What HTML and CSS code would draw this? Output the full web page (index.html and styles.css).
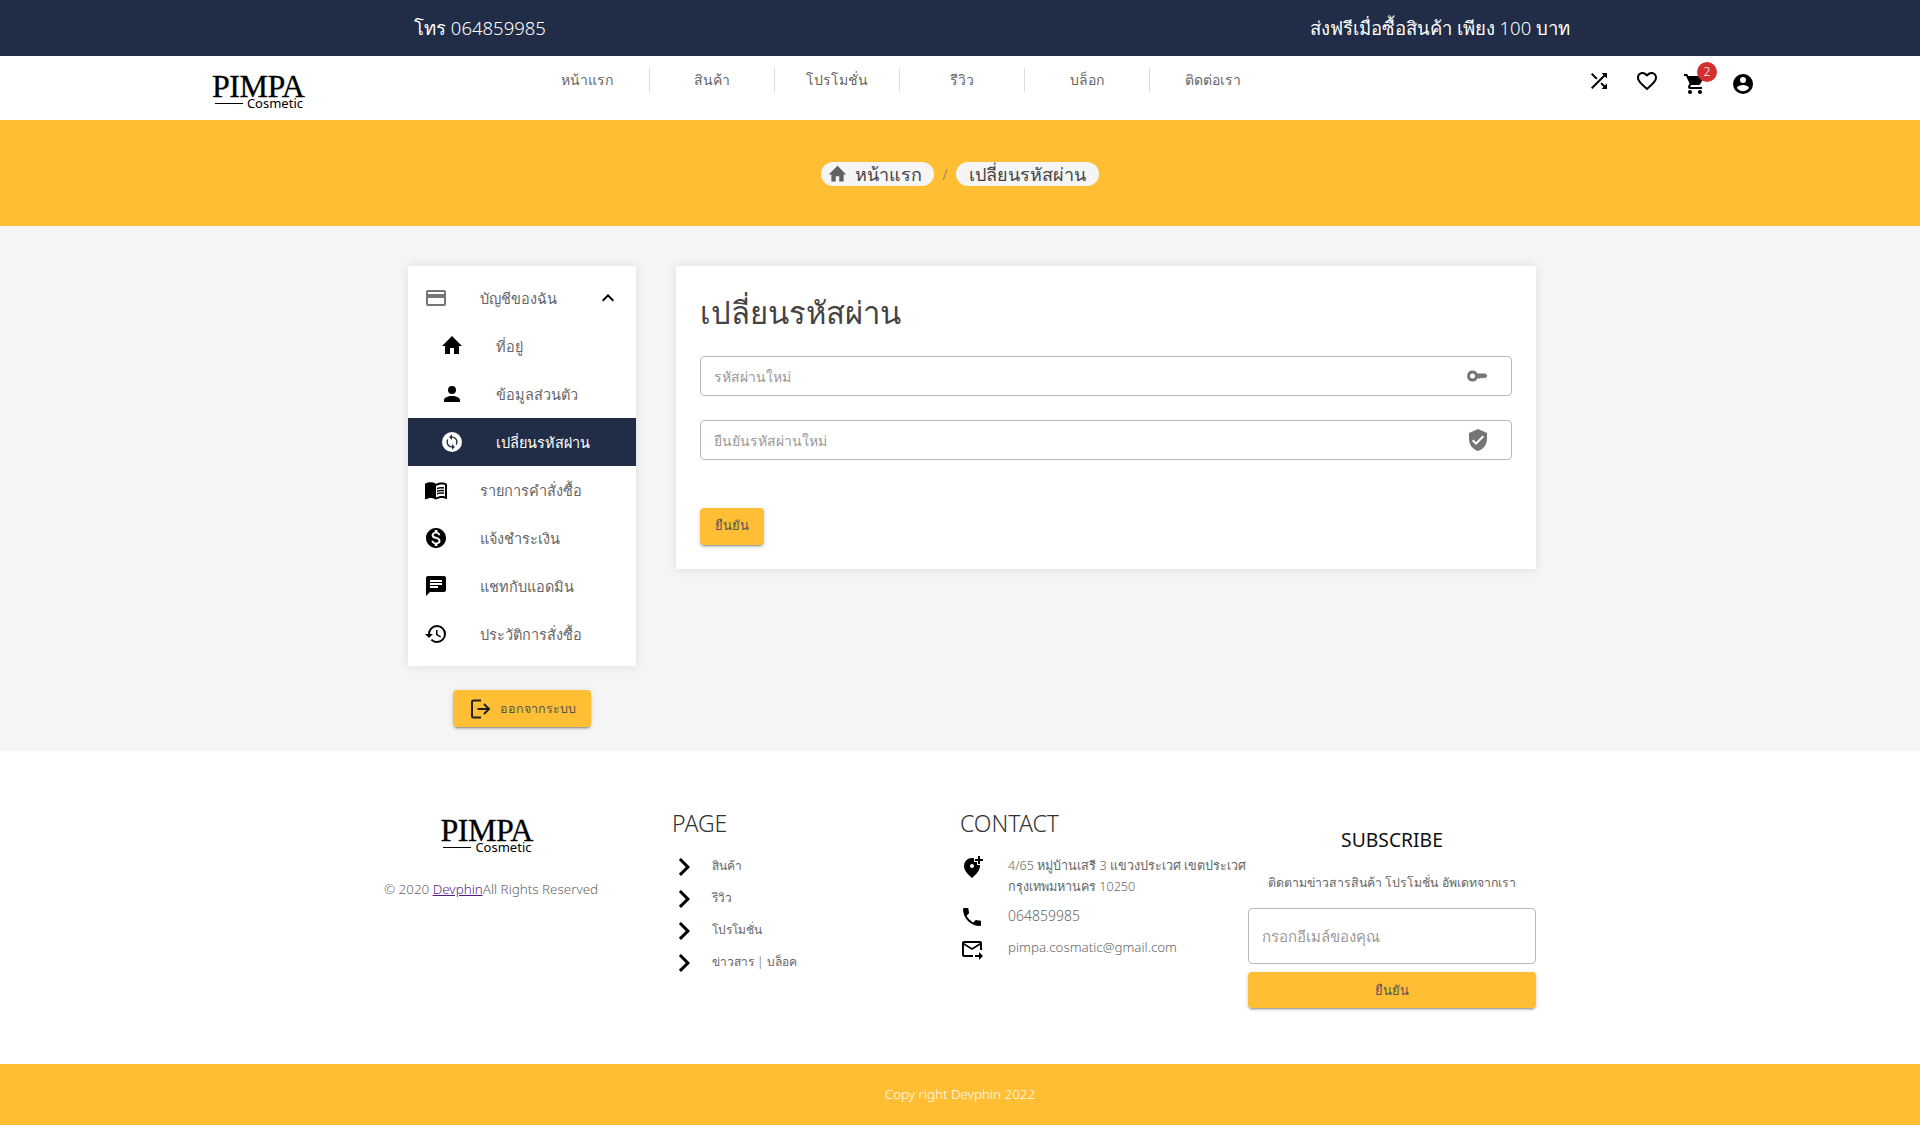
FILE: index.html
```html
<!DOCTYPE html>
<html lang="th">
<head>
    <meta charset="UTF-8">
    <meta name="viewport" content="width=device-width, initial-scale=1.0">
    <title>Pimpa Cosmetic</title>
    <link rel="stylesheet" href="styles.css">
</head>
<body>

    <div class="topbar">
        <div class="topbar-cell">โทร 064859985</div>
        <div class="topbar-cell">ส่งฟรีเมื่อซื้อสินค้า เพียง 100 บาท</div>
    </div>

    <header class="navbar">
        <a class="logo" href="#">
            <span class="logo-main">PIMPA</span>
            <span class="logo-sub">Cosmetic</span>
        </a>
        <nav class="nav-links">
            <a href="#">หน้าแรก</a>
            <a href="#">สินค้า</a>
            <a href="#">โปรโมชั่น</a>
            <a href="#">รีวิว</a>
            <a href="#">บล็อก</a>
            <a href="#">ติดต่อเรา</a>
        </nav>
        <div class="nav-icons">
            <a href="#"><svg class="icon" viewBox="0 0 24 24"><path d="M14.83,13.41L13.42,14.82L16.55,17.95L14.5,20H20V14.5L17.96,16.54L14.83,13.41M14.5,4L16.54,6.04L4,18.59L5.41,20L17.96,7.46L20,9.5V4M10.59,9.17L5.41,4L4,5.41L9.17,10.59L10.59,9.17Z"/></svg></a>
            <a href="#"><svg class="icon" viewBox="0 0 24 24"><path d="M12.1,18.55L12,18.65L11.89,18.55C7.14,14.24 4,11.39 4,8.5C4,6.5 5.5,5 7.5,5C9.04,5 10.54,6 11.07,7.36H12.93C13.46,6 14.96,5 16.5,5C18.5,5 20,6.5 20,8.5C20,11.39 16.86,14.24 12.1,18.55M16.5,3C14.76,3 13.09,3.81 12,5.08C10.91,3.81 9.24,3 7.5,3C4.42,3 2,5.41 2,8.5C2,12.27 5.4,15.36 10.55,20.03L12,21.35L13.45,20.03C18.6,15.36 22,12.27 22,8.5C22,5.41 19.58,3 16.5,3Z"/></svg></a>
            <a href="#" class="cart low"><svg class="icon" viewBox="0 0 24 24"><path d="M17,18C15.89,18 15,18.89 15,20A2,2 0 0,0 17,22A2,2 0 0,0 19,20C19,18.89 18.1,18 17,18M1,2V4H3L6.6,11.59L5.24,14.04C5.09,14.32 5,14.65 5,15A2,2 0 0,0 7,17H19V15H7.42A0.25,0.25 0 0,1 7.17,14.75C7.17,14.7 7.18,14.66 7.2,14.63L8.1,13H15.55C16.3,13 16.96,12.58 17.3,11.97L20.88,5.5C20.95,5.34 21,5.17 21,5A1,1 0 0,0 20,4H5.21L4.27,2M7,18C5.89,18 5,18.89 5,20A2,2 0 0,0 7,22A2,2 0 0,0 9,20C9,18.89 8.1,18 7,18Z"/></svg><span class="badge">2</span></a>
            <a href="#" class="low"><svg class="icon" viewBox="0 0 24 24"><path d="M12,19.2C9.5,19.2 7.29,17.92 6,16C6.03,14 10,12.9 12,12.9C14,12.9 17.97,14 18,16C16.71,17.92 14.5,19.2 12,19.2M12,5A3,3 0 0,1 15,8A3,3 0 0,1 12,11A3,3 0 0,1 9,8A3,3 0 0,1 12,5M12,2A10,10 0 0,0 2,12A10,10 0 0,0 12,22A10,10 0 0,0 22,12C22,6.47 17.5,2 12,2Z"/></svg></a>
        </div>
    </header>

    <div class="banner">
        <a class="crumb crumb-home" href="#"><svg class="icon" viewBox="0 0 24 24"><path d="M10,20V14H14V20H19V12H22L12,2L2,12H5V20H10Z"/></svg>หน้าแรก</a>
        <span class="crumb-sep">/</span>
        <a class="crumb" href="#">เปลี่ยนรหัสผ่าน</a>
    </div>

    <main class="content">
        <aside class="side">
            <ul class="side-menu">
                <li class="side-item">
                    <svg class="icon gray" viewBox="0 0 24 24"><path d="M20,8H4V6H20M20,18H4V12H20M20,4H4C2.89,4 2,4.89 2,6V18A2,2 0 0,0 4,20H20A2,2 0 0,0 22,18V6C22,4.89 21.1,4 20,4Z"/></svg>
                    <span>บัญชีของฉัน</span>
                    <svg class="icon chevron-up" viewBox="0 0 24 24"><path d="M7.41,15.41L12,10.83L16.59,15.41L18,14L12,8L6,14L7.41,15.41Z"/></svg>
                </li>
                <li class="side-item sub">
                    <svg class="icon" viewBox="0 0 24 24"><path d="M10,20V14H14V20H19V12H22L12,2L2,12H5V20H10Z"/></svg>
                    <span>ที่อยู่</span>
                </li>
                <li class="side-item sub">
                    <svg class="icon" viewBox="0 0 24 24"><path d="M12,4A4,4 0 0,1 16,8A4,4 0 0,1 12,12A4,4 0 0,1 8,8A4,4 0 0,1 12,4M12,14C16.42,14 20,15.79 20,18V20H4V18C4,15.79 7.58,14 12,14Z"/></svg>
                    <span>ข้อมูลส่วนตัว</span>
                </li>
                <li class="side-item sub active">
                    <svg class="icon" viewBox="0 0 24 24"><circle cx="12" cy="12" r="10"/><path class="sync" d="M12,18A6,6 0 0,1 6,12C6,11 6.25,10.03 6.7,9.2L5.24,7.74C4.46,8.97 4,10.43 4,12A8,8 0 0,0 12,20V23L16,19L12,15M12,4V1L8,5L12,9V6A6,6 0 0,1 18,12C18,13 17.75,13.97 17.3,14.8L18.76,16.26C19.54,15.03 20,13.57 20,12A8,8 0 0,0 12,4Z" transform="translate(3.6 3.6) scale(.7)"/></svg>
                    <span>เปลี่ยนรหัสผ่าน</span>
                </li>
                <li class="side-item">
                    <svg class="icon" viewBox="0 0 24 24"><path d="M21,5C19.89,4.65 18.67,4.5 17.5,4.5C15.55,4.5 13.45,4.9 12,6C10.55,4.9 8.45,4.5 6.5,4.5C4.55,4.5 2.45,4.9 1,6V20.65C1,20.9 1.25,21.15 1.5,21.15C1.6,21.15 1.65,21.1 1.75,21.1C3.1,20.45 5.05,20 6.5,20C8.45,20 10.55,20.4 12,21.5C13.35,20.65 15.8,20 17.5,20C19.15,20 20.85,20.3 22.25,21.05C22.35,21.1 22.4,21.1 22.5,21.1C22.75,21.1 23,20.85 23,20.6V6C22.4,5.55 21.75,5.25 21,5M21,18.5C19.9,18.15 18.7,18 17.5,18C15.8,18 13.35,18.65 12,19.5V8C13.35,7.15 15.8,6.5 17.5,6.5C18.7,6.5 19.9,6.65 21,7V18.5Z"/><path d="M17.5,10.5C18.38,10.5 19.23,10.59 20,10.76V9.24C19.21,9.09 18.36,9 17.5,9C15.8,9 14.26,9.29 13,9.83V11.49C14.13,10.85 15.7,10.5 17.5,10.5M13,12.49V14.15C14.13,13.51 15.7,13.16 17.5,13.16C18.38,13.16 19.23,13.25 20,13.42V11.9C19.21,11.75 18.36,11.66 17.5,11.66C15.8,11.66 14.26,11.96 13,12.49M17.5,14.33C15.8,14.33 14.26,14.62 13,15.16V16.82C14.13,16.18 15.7,15.83 17.5,15.83C18.38,15.83 19.23,15.92 20,16.09V14.57C19.21,14.41 18.36,14.33 17.5,14.33Z"/><path d="M12 6C10.55 4.9 8.45 4.5 6.5 4.5C4.55 4.5 2.45 4.9 1 6V20.65C1 20.9 1.25 21.15 1.5 21.15C3.1 20.45 5.05 20 6.5 20C8.45 20 10.55 20.4 12 21.5Z"/></svg>
                    <span>รายการคำสั่งซื้อ</span>
                </li>
                <li class="side-item">
                    <svg class="icon" viewBox="0 0 24 24"><path d="M12 2C6.48 2 2 6.48 2 12s4.48 10 10 10 10-4.48 10-10S17.52 2 12 2zm1.41 16.09V20h-2.67v-1.93c-1.71-.36-3.16-1.46-3.27-3.4h1.96c.1 1.05.82 1.87 2.65 1.87 1.96 0 2.4-.98 2.4-1.59 0-.83-.44-1.61-2.67-2.14-2.48-.6-4.18-1.62-4.18-3.67 0-1.72 1.39-2.84 3.11-3.21V4h2.67v1.95c1.86.45 2.79 1.86 2.85 3.39H14.3c-.05-1.11-.64-1.87-2.22-1.87-1.5 0-2.4.68-2.4 1.64 0 .84.65 1.39 2.67 1.91s4.18 1.39 4.18 3.91c-.01 1.83-1.38 2.83-3.12 3.16z"/></svg>
                    <span>แจ้งชำระเงิน</span>
                </li>
                <li class="side-item">
                    <svg class="icon" viewBox="0 0 24 24"><path d="M20,2H4A2,2 0 0,0 2,4V22L6,18H20A2,2 0 0,0 22,16V4C22,2.89 21.1,2 20,2M6,9H18V11H6M14,14H6V12H14M18,8H6V6H18"/></svg>
                    <span>แชทกับแอดมิน</span>
                </li>
                <li class="side-item">
                    <svg class="icon" viewBox="0 0 24 24"><path d="M13.5,8H12V13L16.28,15.54L17,14.33L13.5,12.25V8M13,3A9,9 0 0,0 4,12H1L4.96,16.03L9,12H6A7,7 0 0,1 13,5A7,7 0 0,1 20,12A7,7 0 0,1 13,19C11.07,19 9.32,18.21 8.06,16.94L6.64,18.36C8.27,20 10.5,21 13,21A9,9 0 0,0 22,12A9,9 0 0,0 13,3"/></svg>
                    <span>ประวัติการสั่งซื้อ</span>
                </li>
            </ul>
            <button class="btn btn-logout">
                <svg class="icon-stroke" viewBox="0 0 24 24"><path d="M13 3.5H5.5a1.5 1.5 0 0 0-1.5 1.5v14a1.5 1.5 0 0 0 1.5 1.5H13M9.5 12H21M16 7l5 5-5 5"/></svg>
                ออกจากระบบ
            </button>
        </aside>

        <section class="card">
            <h1 class="card-title">เปลี่ยนรหัสผ่าน</h1>
            <div class="field">
                <input type="password" placeholder="รหัสผ่านใหม่">
                <svg class="icon gray" viewBox="0 0 24 24"><path d="M6.5 6.5a5.5 5.5 0 1 0 5 8H14l1.2-1 1.2 1 1.2-1 1.2 1 2.7-2.5-2-2.5H11.5a5.5 5.5 0 0 0-5-3zm0 3a2.5 2.5 0 1 1 0 5 2.5 2.5 0 0 1 0-5z"/></svg>
            </div>
            <div class="field">
                <input type="password" placeholder="ยืนยันรหัสผ่านใหม่">
                <svg class="icon gray" viewBox="0 0 24 24"><path d="M10,17L6,13L7.41,11.59L10,14.17L16.59,7.58L18,9M12,1L3,5V11C3,16.55 6.84,21.74 12,23C17.16,21.74 21,16.55 21,11V5L12,1Z"/></svg>
            </div>
            <button class="btn btn-confirm">ยืนยัน</button>
        </section>
    </main>

    <footer class="footer">
        <div class="footer-about">
            <a class="logo" href="#">
                <span class="logo-main">PIMPA</span>
                <span class="logo-sub">Cosmetic</span>
            </a>
            <p>© 2020 <a href="#">Devphin</a>All Rights Reserved</p>
        </div>
        <div>
            <h3 class="footer-title">PAGE</h3>
            <ul class="page-links">
                <li><svg class="icon" viewBox="0 0 24 24"><path d="M8.59,16.58L13.17,12L8.59,7.41L10,6L16,12L10,18L8.59,16.58Z"/></svg><span>สินค้า</span></li>
                <li><svg class="icon" viewBox="0 0 24 24"><path d="M8.59,16.58L13.17,12L8.59,7.41L10,6L16,12L10,18L8.59,16.58Z"/></svg><span>รีวิว</span></li>
                <li><svg class="icon" viewBox="0 0 24 24"><path d="M8.59,16.58L13.17,12L8.59,7.41L10,6L16,12L10,18L8.59,16.58Z"/></svg><span>โปรโมชั่น</span></li>
                <li><svg class="icon" viewBox="0 0 24 24"><path d="M8.59,16.58L13.17,12L8.59,7.41L10,6L16,12L10,18L8.59,16.58Z"/></svg><span>ข่าวสาร | บล็อค</span></li>
            </ul>
        </div>
        <div>
            <h3 class="footer-title">CONTACT</h3>
            <ul class="contact-list">
                <li><svg class="icon" viewBox="0 0 24 24"><path d="M20 1v3h3v2h-3v3h-2V6h-3V4h3V1h2zm-8 12c1.1 0 2-.9 2-2s-.9-2-2-2-2 .9-2 2 .9 2 2 2zm2-9.75V7h3v3h2.92c.05.39.08.79.08 1.2 0 3.32-2.67 7.25-8 11.8-5.33-4.55-8-8.48-8-11.8C4 6.22 7.8 3 12 3c.68 0 1.35.08 2 .25z"/></svg><span class="address">4/65 หมู่บ้านเสรี 3 แขวงประเวศ เขตประเวศ<br>กรุงเทพมหานคร 10250</span></li>
                <li><svg class="icon" viewBox="0 0 24 24"><path d="M6.62,10.79C8.06,13.62 10.38,15.94 13.21,17.38L15.41,15.18C15.69,14.9 16.08,14.82 16.43,14.93C17.55,15.3 18.75,15.5 20,15.5A1,1 0 0,1 21,16.5V20A1,1 0 0,1 20,21A17,17 0 0,1 3,4A1,1 0 0,1 4,3H7.5A1,1 0 0,1 8.5,4C8.5,5.25 8.7,6.45 9.07,7.57C9.18,7.92 9.1,8.31 8.82,8.59L6.62,10.79Z"/></svg><span>064859985</span></li>
                <li><svg class="icon" viewBox="0 0 24 24"><path d="M20 4H4c-1.1 0-2 .9-2 2v12c0 1.1.9 2 2 2h9v-2H4V8l8 5 8-5v5h2V6c0-1.1-.9-2-2-2zm-8 7L4 6h16l-8 5zm7 4l4 4-4 4v-3h-4v-2h4v-3z"/></svg><span class="email">pimpa.cosmatic@gmail.com</span></li>
            </ul>
        </div>
        <div class="subscribe">
            <h3>SUBSCRIBE</h3>
            <p>ติดตามข่าวสารสินค้า โปรโมชั่น อัพเดทจากเรา</p>
            <input type="text" placeholder="กรอกอีเมล์ของคุณ">
            <button class="btn btn-subscribe">ยืนยัน</button>
        </div>
    </footer>

    <div class="copyright">Copy right Devphin 2022</div>

</body>
</html>
```

FILE: styles.css
```css
* {
    box-sizing: border-box;
}
body {
    margin: 0;
    font-family: "Noto Sans", "Open Sans", sans-serif;
    font-weight: 300;
    background-color: #fff;
    color: #666;
}
a {
    color: inherit;
    text-decoration: none;
}
ul {
    list-style: none;
    margin: 0;
    padding: 0;
}
.icon {
    width: 24px;
    height: 24px;
    fill: currentColor;
    flex: none;
}
.gray {
    color: #757575;
}

.topbar {
    display: flex;
    height: 56px;
    background: #212c46;
    color: #fff;
    font-size: 18.5px;
}
.topbar-cell {
    flex: 1;
    display: flex;
    align-items: center;
    justify-content: center;
}

.navbar {
    display: flex;
    align-items: flex-start;
    height: 64px;
    padding-left: 212px;
    background: #fff;
}
.logo {
    display: block;
    width: 91px;
    height: 34px;
    margin-top: 18px;
    color: #000;
    font-family: "Liberation Serif", serif;
    font-weight: 400;
}
.logo-main {
    display: block;
    font-size: 32px;
    line-height: 24px;
    letter-spacing: -0.5px;
    white-space: nowrap;
    -webkit-text-stroke: 0.3px #000;
}
.logo-sub {
    display: flex;
    align-items: center;
    justify-content: flex-end;
    gap: 4px;
    font-family: "Noto Sans", sans-serif;
    font-size: 13px;
    line-height: 10px;
}
.logo-sub::before {
    content: "";
    width: 28px;
    height: 1px;
    background: #000;
}
.nav-links {
    display: flex;
    margin: 12px 0 0 222px;
}
.nav-links a {
    width: 125px;
    height: 24px;
    line-height: 24px;
    font-size: 14px;
    text-align: center;
    border-right: 1px solid #ddd;
}
.nav-links a:last-child {
    border-right: none;
}
.nav-icons {
    display: flex;
    margin: 13px 0 0 300px;
    color: #000;
}
.nav-icons a {
    position: relative;
    display: flex;
    justify-content: center;
    width: 48px;
}
.nav-icons .low {
    padding-top: 3px;
}
.badge {
    position: absolute;
    top: -7px;
    left: 26px;
    width: 20px;
    height: 20px;
    border-radius: 50%;
    background: #d32f2f;
    color: #fff;
    font-size: 12px;
    line-height: 20px;
    text-align: center;
}

.banner {
    display: flex;
    align-items: center;
    justify-content: center;
    height: 106px;
    padding-top: 2px;
    background: #ffbe33;
}
.crumb {
    display: flex;
    align-items: center;
    height: 24px;
    padding: 0 13px;
    border-radius: 12px;
    background: #f5f5f5;
    font-size: 18px;
    color: #444;
}
.crumb-home {
    padding: 0 12px 0 6px;
}
.crumb-home .icon {
    width: 21px;
    height: 21px;
    color: #616161;
    margin-right: 7px;
}
.crumb-sep {
    width: 22px;
    text-align: center;
    font-size: 14px;
    color: #777;
}

.content {
    display: flex;
    align-items: flex-start;
    gap: 40px;
    padding: 40px 0 24px 408px;
    background: #f5f5f5;
}
.side {
    width: 228px;
}
.side-menu {
    padding: 8px 0;
    background: #fff;
    box-shadow: 0 0 10px rgba(0, 0, 0, 0.1);
}
.side-item {
    display: flex;
    align-items: center;
    height: 48px;
    padding-left: 16px;
    font-size: 14.5px;
}
.side-item .icon {
    margin-right: 32px;
    color: #000;
}
.side-item .gray {
    color: #757575;
}
.side-item.sub {
    padding-left: 32px;
}
.side-item .chevron-up {
    margin: 0 16px 0 auto;
}
.side-item.active {
    background: #212c46;
    color: #fff;
}
.side-item.active .icon {
    color: #fff;
}
.sync {
    fill: #212c46;
}

.btn {
    display: block;
    border: none;
    border-radius: 4px;
    background: #ffbe33;
    color: #555;
    font-family: inherit;
    font-weight: 300;
    font-size: 13px;
    box-shadow: 0 3px 1px -2px rgba(0, 0, 0, 0.2), 0 2px 2px 0 rgba(0, 0, 0, 0.14), 0 1px 5px 0 rgba(0, 0, 0, 0.12);
}
.btn-logout {
    display: flex;
    align-items: center;
    justify-content: center;
    gap: 8px;
    width: 138px;
    height: 37px;
    margin: 24px auto 0;
    font-size: 12.5px;
}
.icon-stroke {
    width: 24px;
    height: 24px;
    fill: none;
    stroke: #212121;
    stroke-width: 2;
}
.btn-confirm {
    width: 64px;
    height: 37px;
    margin-top: 48px;
    padding-bottom: 3px;
}

.card {
    width: 860px;
    padding: 26px 24px 24px;
    background: #fff;
    box-shadow: 0 0 10px rgba(0, 0, 0, 0.1);
}
.card-title {
    margin: 0 0 24px;
    font-size: 31px;
    line-height: 40px;
    font-weight: 300;
    color: #444;
}
.field {
    position: relative;
    height: 40px;
    margin-top: 24px;
}
.field input {
    width: 100%;
    height: 100%;
    padding: 0 60px 0 13px;
    border: 1px solid #bbb;
    border-radius: 4px;
    outline: none;
    font-family: inherit;
    font-weight: 300;
    font-size: 14px;
}
.field .icon {
    position: absolute;
    top: 8px;
    right: 22px;
}
input::placeholder {
    color: #999;
}

.footer {
    display: grid;
    grid-template-columns: repeat(4, 288px);
    padding: 56px 384px;
    background: #fff;
}
.footer-about {
    width: 214px;
    padding-top: 11px;
    text-align: center;
}
.footer-about .logo {
    margin: 0 auto;
    position: relative;
    left: -5px;
}
.footer-about p {
    margin: 27px 0 0;
    font-size: 13.4px;
    line-height: 20px;
    white-space: nowrap;
}
.footer-about p a {
    color: #551a8b;
    text-decoration: underline;
}
.footer-title {
    margin: 0;
    font-size: 23px;
    line-height: 32px;
    font-weight: 300;
    color: #333;
}
.page-links {
    margin-top: 12px;
}
.page-links li {
    display: flex;
    align-items: center;
    height: 32px;
    font-size: 12px;
}
.page-links span {
    padding-bottom: 3px;
}
.page-links .icon {
    width: 36px;
    height: 36px;
    margin: 0 10px 0 -6px;
    color: #000;
}
.contact-list {
    display: flex;
    flex-direction: column;
    gap: 8px;
    margin-top: 16px;
}
.contact-list li {
    display: flex;
    gap: 24px;
    font-size: 14px;
    line-height: 21px;
    white-space: nowrap;
}
.contact-list .address {
    font-size: 12.6px;
}
.contact-list .email {
    font-size: 13.3px;
}
.contact-list .icon {
    color: #000;
}
.subscribe {
    padding-top: 19px;
    text-align: center;
}
.subscribe h3 {
    margin: 0;
    font-size: 19.3px;
    line-height: 28px;
    font-weight: 400;
    color: #111;
}
.subscribe p {
    margin: 19px 0 15px;
    font-size: 12.3px;
    line-height: 20px;
}
.subscribe input {
    display: block;
    width: 100%;
    height: 56px;
    padding: 0 13px;
    border: 1px solid #bbb;
    border-radius: 4px;
    outline: none;
    font-family: inherit;
    font-weight: 300;
    font-size: 15px;
}
.btn-subscribe {
    width: 100%;
    height: 36px;
    margin-top: 8px;
}

.copyright {
    height: 61px;
    line-height: 61px;
    background: #ffbe33;
    color: #fff;
    font-size: 13.4px;
    text-align: center;
}
```
